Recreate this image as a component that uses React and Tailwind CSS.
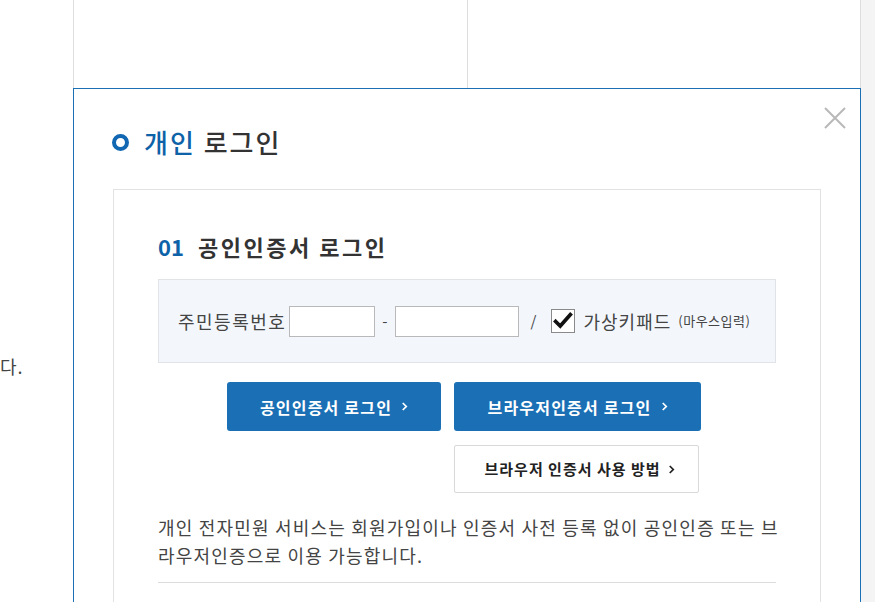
const font = { fontFamily: '"Noto Sans CJK KR", "Noto Sans", sans-serif' }

const Chevron = ({ className }) => (
  <svg viewBox="0 0 8 12" className={className} fill="none" stroke="currentColor" strokeWidth="2">
    <path d="M2 2l4 4-4 4" />
  </svg>
)

const App = () => {
  return (
    <div className="w-[875px] h-[602px] overflow-hidden bg-white flex items-start text-[#333]" style={font}>
      {/* left edge of page content behind the modal */}
      <div className="w-[73px] shrink-0 pt-[352px] text-[18px] leading-[28px] text-[#444] tracking-[1px]">다.</div>

      <div className="w-[788px] shrink-0 flex flex-col">
        {/* top table */}
        <div className="h-[88px] shrink-0 grid grid-cols-[394px_1fr] border-x border-[#dddddd]">
          <div className="border-r border-[#dddddd]" />
          <div />
        </div>

        {/* modal */}
        <div className="border border-[#1a6fb5] bg-white px-[39px] pb-[40px]">
          <div className="flex justify-end items-start -mr-[25px] pt-[18px] h-[35px]">
            <svg viewBox="0 0 22 22" className="w-[22px] h-[22px] shrink-0" stroke="#b8b8b8" strokeWidth="2">
              <path d="M1 1l20 20M21 1L1 21" />
            </svg>
          </div>
          <div className="flex items-center h-[36px]">
            <span className="w-[17px] h-[17px] rounded-full border-[4px] border-[#1167b1] mr-[15px] -ml-[1px]" />
            <h1 className="text-[26px] leading-[36px] font-medium tracking-[2px]">
              <span className="text-[#0e62a8]">개인</span> 로그인
            </h1>
          </div>

          <div className="mt-[29px] border border-[#e2e2e2] px-[44px] pt-[40px] pb-[40px]">
            <h2 className="flex items-center text-[22px] leading-[32px] font-bold">
              <span className="text-[#0e62a8]">01</span>
              <span className="ml-[14px] text-[#333] tracking-[2.5px]">공인인증서 로그인</span>
            </h2>

            <div className="mt-[17px] h-[84px] bg-[#f3f7fc] border border-[#e1e3e6] flex items-center pl-[19px] text-[18px] text-[#444]">
              <span className="tracking-[1.5px]">주민등록번호</span>
              <input className="ml-[3px] w-[86px] h-[31px] bg-white border border-[#b9b9b9] outline-none" />
              <span className="mx-[7px] text-[15px]">-</span>
              <input className="w-[124px] h-[31px] bg-white border border-[#b9b9b9] outline-none" />
              <span className="ml-[12px] text-[15px]">/</span>
              <span className="ml-[15px] w-[24px] h-[24px] bg-white border border-[#8a8a8a] flex items-center justify-center">
                <svg viewBox="0 0 24 24" className="w-[22px] h-[22px]" fill="none" stroke="#111" strokeWidth="4" strokeLinecap="square">
                  <path d="M4 12.5l5 5L20 5" />
                </svg>
              </span>
              <span className="ml-[8px] tracking-[1px]">가상키패드</span>
              <span className="ml-[7px] text-[13px] tracking-[0.5px] text-[#444]">(마우스입력)</span>
            </div>

            <div className="mt-[19px] ml-[69px] w-[474px]">
              <div className="flex gap-[13px]">
                <button className="w-[214px] h-[49px] rounded-[3px] bg-[#1a6fb5] text-white text-[16px] font-bold tracking-[1.2px] flex items-center justify-center gap-[9px]">
                  공인인증서 로그인
                  <Chevron className="w-[7px] h-[11px]" />
                </button>
                <button className="w-[247px] h-[49px] rounded-[3px] bg-[#1a6fb5] text-white text-[16px] font-bold tracking-[1.2px] flex items-center justify-center gap-[9px]">
                  브라우저인증서 로그인
                  <Chevron className="w-[7px] h-[11px]" />
                </button>
              </div>
              <div className="flex justify-end pr-[2px] mt-[14px]">
                <button className="w-[245px] h-[48px] rounded-[2px] bg-white border border-[#d9d9d9] text-[#222] text-[15px] font-bold tracking-[1px] flex items-center justify-center gap-[7px] pl-[6px]">
                  브라우저 인증서 사용 방법
                  <Chevron className="w-[7px] h-[11px]" />
                </button>
              </div>
            </div>

            <p className="mt-[20px] -mr-[8px] text-[18px] leading-[28px] text-[#444] tracking-[1.2px]">
              개인 전자민원 서비스는 회원가입이나 인증서 사전 등록 없이 공인인증 또는 브라우저인증으로 이용 가능합니다.
            </p>
            <div className="mt-[13px] border-t border-[#dcdcdc]" />
          </div>
        </div>
      </div>

      <div className="flex-1 self-stretch bg-[#f4f4f4]" />
    </div>
  )
}

export default App
